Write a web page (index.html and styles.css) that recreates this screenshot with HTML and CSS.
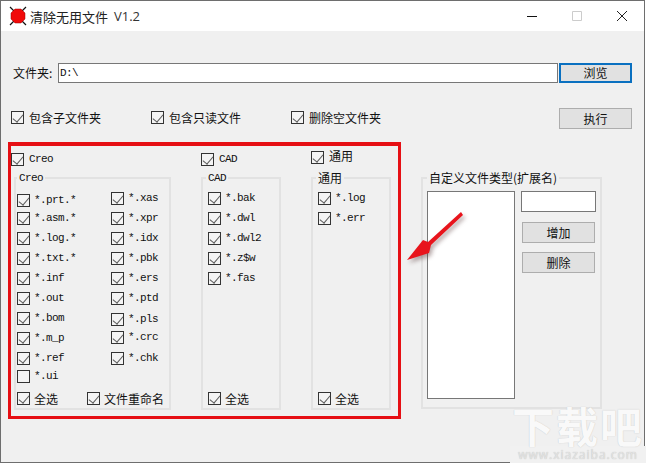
FILE: index.html
```html
<!DOCTYPE html>
<html lang="zh-CN">
<head>
<meta charset="utf-8">
<title>清除无用文件 V1.2</title>
<link rel="stylesheet" href="styles.css">
</head>
<body>
<div class="window">
  <header class="titlebar">
    <svg class="app-icon" width="18" height="20" viewBox="0 0 18 20">
      <path d="M1 1 5 5M17 1 13 5M1 19 5 15M17 19 13 15" stroke="#111" stroke-width="1.2" fill="none"/>
      <path d="M6 3h6l4 4v6l-4 4H6l-4-4V7z" fill="#f00a0a" stroke="#900" stroke-width=".5"/>
    </svg>
    <span class="title">清除无用文件</span>
    <span class="version">V1.2</span>
    <div class="controls">
      <svg width="10" height="10" viewBox="0 0 10 10"><path d="M0 5.5h10" stroke="#111"/></svg>
      <svg width="10" height="10" viewBox="0 0 10 10"><path d="M.5.5h9v9h-9z" stroke="#ccc" fill="none"/></svg>
      <svg width="10" height="10" viewBox="0 0 10 10"><path d="M0 0 10 10M10 0 0 10" stroke="#222"/></svg>
    </div>
  </header>
  <main class="content">
    <div class="path-row">
      <span class="cn path-label">文件夹:</span>
      <input class="path-input mono" type="text" value="D:\">
      <button class="btn btn-wide btn-focus">浏览</button>
    </div>
    <div class="options-row">
      <label class="cb opt"><input type="checkbox" checked><span class="cn">包含子文件夹</span></label>
      <label class="cb opt"><input type="checkbox" checked><span class="cn">包含只读文件</span></label>
      <label class="cb opt"><input type="checkbox" checked><span class="cn">删除空文件夹</span></label>
      <button class="btn btn-wide run">执行</button>
    </div>
    <div class="work">
      <section class="panel">
        <div class="col col-creo">
          <label class="cb head"><input type="checkbox" checked><span class="mono">Creo</span></label>
          <fieldset class="group group-creo">
            <legend class="mono">Creo</legend>
            <div class="grid">
              <label class="cb dn2"><input type="checkbox" checked><span class="mono">*.prt.*</span></label>
              <label class="cb"><input type="checkbox" checked><span class="mono">*.xas</span></label>
              <label class="cb"><input type="checkbox" checked><span class="mono">*.asm.*</span></label>
              <label class="cb"><input type="checkbox" checked><span class="mono">*.xpr</span></label>
              <label class="cb"><input type="checkbox" checked><span class="mono">*.log.*</span></label>
              <label class="cb"><input type="checkbox" checked><span class="mono">*.idx</span></label>
              <label class="cb"><input type="checkbox" checked><span class="mono">*.txt.*</span></label>
              <label class="cb"><input type="checkbox" checked><span class="mono">*.pbk</span></label>
              <label class="cb"><input type="checkbox" checked><span class="mono">*.inf</span></label>
              <label class="cb"><input type="checkbox" checked><span class="mono">*.ers</span></label>
              <label class="cb"><input type="checkbox" checked><span class="mono">*.out</span></label>
              <label class="cb"><input type="checkbox" checked><span class="mono">*.ptd</span></label>
              <label class="cb"><input type="checkbox" checked><span class="mono">*.bom</span></label>
              <label class="cb dn1"><input type="checkbox" checked><span class="mono">*.pls</span></label>
              <label class="cb"><input type="checkbox" checked><span class="mono">*.m_p</span></label>
              <label class="cb up1"><input type="checkbox" checked><span class="mono">*.crc</span></label>
              <label class="cb"><input type="checkbox" checked><span class="mono">*.ref</span></label>
              <label class="cb"><input type="checkbox" checked><span class="mono">*.chk</span></label>
              <label class="cb up2"><input type="checkbox"><span class="mono">*.ui</span></label>
            </div>
            <div class="group-foot foot-creo">
              <label class="cb"><input type="checkbox" checked><span class="cn">全选</span></label>
              <label class="cb"><input type="checkbox" checked><span class="cn">文件重命名</span></label>
            </div>
          </fieldset>
        </div>
        <div class="col col-cad">
          <label class="cb head"><input type="checkbox" checked><span class="mono">CAD</span></label>
          <fieldset class="group">
            <legend class="mono">CAD</legend>
            <div class="stack">
              <label class="cb"><input type="checkbox" checked><span class="mono">*.bak</span></label>
              <label class="cb"><input type="checkbox" checked><span class="mono">*.dwl</span></label>
              <label class="cb"><input type="checkbox" checked><span class="mono">*.dwl2</span></label>
              <label class="cb"><input type="checkbox" checked><span class="mono">*.z$w</span></label>
              <label class="cb"><input type="checkbox" checked><span class="mono">*.fas</span></label>
            </div>
            <div class="group-foot">
              <label class="cb"><input type="checkbox" checked><span class="cn">全选</span></label>
            </div>
          </fieldset>
        </div>
        <div class="col col-common">
          <label class="cb head head-high"><input type="checkbox" checked><span class="cn">通用</span></label>
          <fieldset class="group">
            <legend class="cn">通用</legend>
            <div class="stack">
              <label class="cb"><input type="checkbox" checked><span class="mono">*.log</span></label>
              <label class="cb"><input type="checkbox" checked><span class="mono">*.err</span></label>
            </div>
            <div class="group-foot">
              <label class="cb"><input type="checkbox" checked><span class="cn">全选</span></label>
            </div>
          </fieldset>
        </div>
      </section>
      <fieldset class="custom">
        <legend class="cn">自定义文件类型(扩展名)</legend>
        <div class="custom-body">
          <div class="listbox"></div>
          <div class="custom-side">
            <input class="ext-input" type="text">
            <button class="btn btn-side btn-add">增加</button>
            <button class="btn btn-side btn-del">删除</button>
          </div>
        </div>
      </fieldset>
    </div>
  </main>
</div>
<svg class="arrow" width="70" height="64" viewBox="0 0 70 64">
  <path d="M56 4 58 7 26 37 24 45 2 52 18 32 23 34z" fill="#e8141c"/>
</svg>
<div class="watermark">
  <div class="wm-big">下载吧</div>
  <div class="wm-small">www.xiazaiba.com</div>
</div>
</body>
</html>
```
FILE: styles.css
```css
* { box-sizing: border-box; }
html, body { margin: 0; height: 100%; }
body {
  background: #fff;
  position: relative;
  overflow: hidden;
  color: #111;
  font: 12px "Noto Sans CJK SC", sans-serif;
}
.cn { font: 12px/14px "Noto Sans CJK SC", sans-serif; }
.mono {
  font: 11px/13px "Liberation Mono", "Noto Sans CJK SC", monospace;
  letter-spacing: -0.6px;
}
.window {
  width: 645px;
  height: 463px;
  background: #f0f0f0;
  border: 1px solid #6e6e6e;
  display: flex;
  flex-direction: column;
}
.titlebar {
  height: 30px;
  flex: none;
  background: #fff;
  display: flex;
  align-items: center;
  padding-left: 8px;
}
.app-icon { flex: none; }
.title { margin-left: 3px; font-size: 13px; color: #222; }
.version { margin-left: 6px; font: 13px "Open Sans", sans-serif; color: #333; }
.controls {
  margin-left: auto;
  display: flex;
  gap: 35px;
  padding-right: 17px;
}
.content { flex: 1; padding: 32px 0 0 7px; }
.path-row { display: flex; align-items: center; height: 20px; padding-left: 5px; }
.path-label { width: 45px; flex: none; }
.path-input {
  width: 500px;
  height: 20px;
  flex: none;
  background: #fff;
  border: 1px solid #777;
  padding: 0 1px;
  outline: 0;
  color: #111;
}
.btn {
  font: 12px/14px "Noto Sans CJK SC", sans-serif;
  background: #e1e1e1;
  border: 1px solid #adadad;
  color: #111;
  padding: 0;
}
.btn-wide { width: 73px; height: 20px; flex: none; }
.btn-focus { margin-left: 1px; border: 2px solid #0a70c0; }
.options-row {
  display: flex;
  margin-top: 25px;
  height: 21px;
  padding-left: 3px;
}
.opt { width: 140px; }
.opt:nth-child(3) { width: 268px; }
.run { margin-left: auto; margin-right: 12px; height: 21px; }
.work { display: flex; margin-top: 13px; }
.panel {
  width: 393px;
  height: 277px;
  border: 3px solid #e60f14;
  border-top-width: 4px;
  display: flex;
  flex: none;
}
.col { display: flex; flex-direction: column; flex: none; }
.col-creo { width: 190px; }
.col-cad { width: 110px; }
.col-common { width: 80px; }
.cb {
  display: flex;
  align-items: flex-start;
  gap: 4px;
  height: 20px;
  padding-top: 3px;
}
.opt, .head { gap: 5px; }
.cb input {
  appearance: none;
  width: 13px;
  height: 13px;
  margin: 0;
  flex: none;
  background: #f4f4f4;
  border: 1px solid #333;
  position: relative;
}
.cb input:checked::after {
  content: "";
  position: absolute;
  left: 3px;
  top: 0;
  width: 5px;
  height: 9px;
  border: solid #5a5a5a;
  border-width: 0 1.6px 1.6px 0;
  transform: rotate(40deg);
}
.dn1 { padding-top: 4px; }
.dn2 { padding-top: 5px; }
.up1 { padding-top: 2px; }
.up2 { padding-top: 1px; }
.head { height: 25px; padding-top: 7px; }
.head-high { padding-top: 5px; }
.head-high .cn { margin-top: -2px; }
.group {
  margin: 0;
  padding: 0 0 2px 3px;
  border: 2px solid #e2e2e2;
  width: 80px;
  height: 239px;
}
.group legend { padding: 0 2px; line-height: 14px; }
.group-creo { width: 157px; margin-left: 3px; padding-left: 1px; }
.grid {
  display: grid;
  grid-template-columns: 94px 1fr;
  grid-auto-rows: 20px;
  margin-top: 4px;
  height: 200px;
}
.stack { margin-top: 4px; padding-left: 2px; height: 200px; }
.group-foot { padding-left: 2px; }
.foot-creo { display: flex; gap: 29px; padding-left: 0; }
.custom {
  margin: 0 0 10px 20px;
  padding: 0 0 0 4px;
  border: 2px solid #e2e2e2;
  width: 181px;
  height: 238px;
  align-self: flex-end;
}
.custom legend { padding: 0 2px; line-height: 14px; }
.custom-body { display: flex; margin-top: 6px; }
.listbox {
  width: 88px;
  height: 208px;
  flex: none;
  background: #fff;
  border: 1px solid #777;
}
.custom-side { margin-left: 6px; display: flex; flex-direction: column; align-items: flex-start; }
.ext-input {
  width: 75px;
  height: 21px;
  background: #fff;
  border: 1px solid #777;
  outline: 0;
}
.btn-side { width: 73px; height: 21px; margin-left: 1px; }
.btn-add { margin-top: 10px; }
.btn-del { margin-top: 9px; }
.arrow {
  position: absolute;
  left: 405px;
  top: 208px;
  filter: drop-shadow(2px 3px 2px rgba(90, 60, 60, .45));
}
.watermark {
  position: absolute;
  right: 0;
  bottom: 0;
  width: 136px;
  text-align: center;
  color: #f9f9f9;
}
.wm-big {
  font: 700 42px/42px "Noto Sans CJK SC", sans-serif;
  letter-spacing: 2px;
  text-shadow: 0 0 1px #bdbdbd;
}
.wm-small {
  background: #f1f1f1;
  font: 12px/17px "Open Sans", sans-serif;
  letter-spacing: 1px;
  color: #e4e4e4;
  text-shadow: 0 0 1px #b5b5b5;
  white-space: nowrap;
}
```
